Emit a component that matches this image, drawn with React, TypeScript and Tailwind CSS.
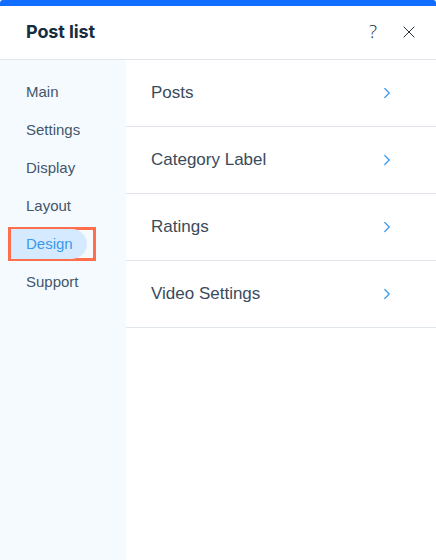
import { ChevronRight, X } from "lucide-react";

const menu = ["Main", "Settings", "Display", "Layout", "Design", "Support"];
const rows = ["Posts", "Category Label", "Ratings", "Video Settings"];

const App = () => {
  const active = "Design";

  return (
    <div className="w-[436px] h-[560px] bg-white flex flex-col overflow-hidden font-['Liberation_Sans',sans-serif]">
      <div className="h-[6px] bg-[#116dff] rounded-t-[3px]" />
      <div className="h-[54px] flex items-center pl-[26px] pr-[17px] border-b border-[#dfe5eb]">
        <h1 className="text-[18px] font-bold text-[#162d3d] font-['Inter',sans-serif] tracking-[-0.1px] pb-[2px]">
          Post list
        </h1>
        <div className="ml-auto flex items-center gap-[22px] text-[#20303c] pb-[2px]">
          <span className="text-[19px] font-['Open_Sans',sans-serif] font-light leading-none">?</span>
          <X size={20} strokeWidth={1.2} />
        </div>
      </div>

      <div className="flex flex-1">
        <div className="w-[126px] bg-[#f5faff] pt-[13px] flex flex-col">
          {menu.map((item) => (
            <div key={item} className="h-[38px] flex items-center pl-[8px]">
              {item === active ? (
                <div className="relative flex items-center h-[34px] w-[88px] border-[3px] border-[#ff6f4d]">
                  <div className="h-[30px] w-[76px] bg-[#d6eaff] rounded-r-full flex items-center pl-[15px] text-[15px] text-[#3899ec]">
                    {item}
                  </div>
                </div>
              ) : (
                <span className="pl-[18px] text-[15px] text-[#44566a]">{item}</span>
              )}
            </div>
          ))}
        </div>

        <div className="flex-1 flex flex-col">
          {rows.map((row) => (
            <div
              key={row}
              className="h-[67px] flex items-center pl-[25px] pr-[40px] border-b border-[#dfe5eb] text-[17px] text-[#3a4b5c]"
            >
              <span>{row}</span>
              <ChevronRight size={18} strokeWidth={1.6} className="ml-auto text-[#3899ec]" />
            </div>
          ))}
        </div>
      </div>
    </div>
  );
};

export default App;
